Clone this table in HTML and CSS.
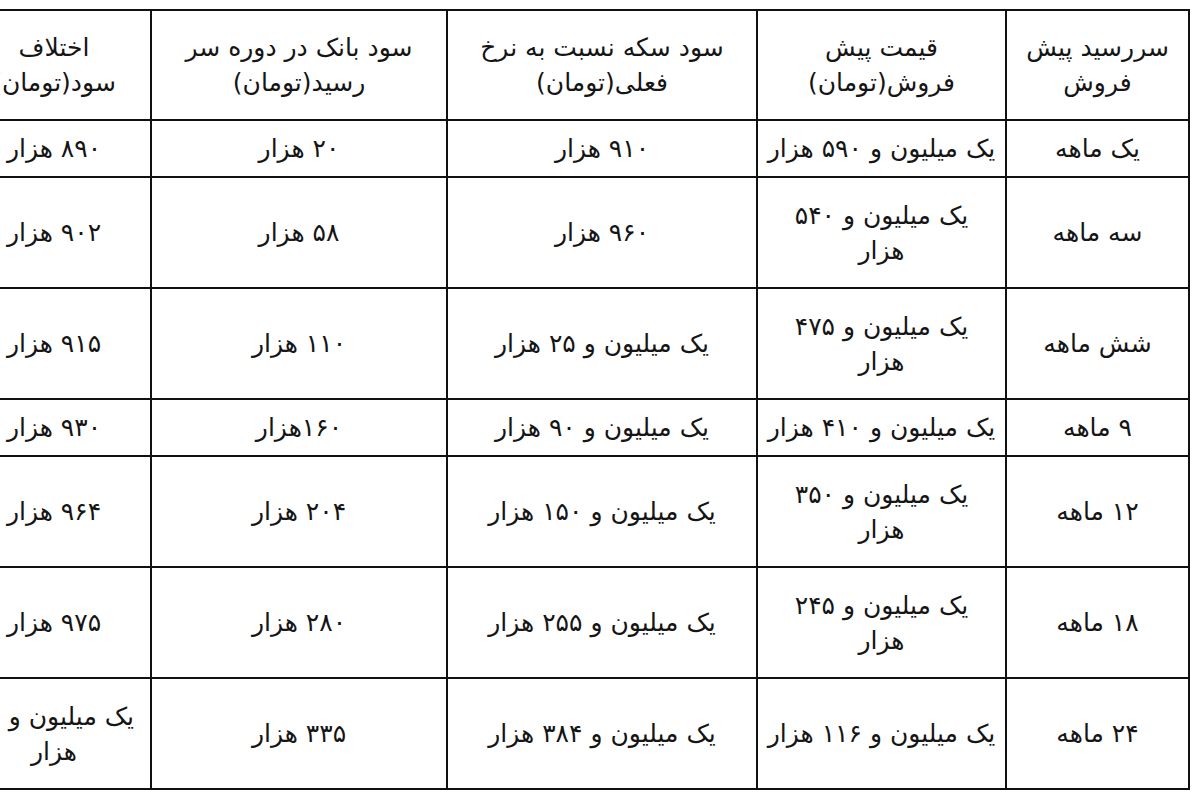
FILE: index.html
```html
<!DOCTYPE html>
<html lang="fa" dir="rtl">
<head>
<meta charset="utf-8">
<title>جدول پیش فروش سکه</title>
<link rel="stylesheet" href="styles.css">
</head>
<body>
<div class="page">
<table class="grid">
  <colgroup>
    <col class="c1"><col class="c2"><col class="c3"><col class="c4"><col class="c5">
  </colgroup>
  <tr class="r-head">
    <td>سررسید پیش<br>فروش</td>
    <td>قیمت پیش<br>فروش(تومان)</td>
    <td>سود سکه نسبت به نرخ<br>فعلی(تومان)</td>
    <td>سود بانک در دوره سر<br>رسید(تومان)</td>
    <td>اختلاف<br>سود(تومان)</td>
  </tr>
  <tr class="r-s">
    <td>یک ماهه</td>
    <td>یک میلیون و ۵۹۰ هزار</td>
    <td>۹۱۰ هزار</td>
    <td>۲۰ هزار</td>
    <td>۸۹۰ هزار</td>
  </tr>
  <tr class="r-l">
    <td>سه ماهه</td>
    <td>یک میلیون و ۵۴۰<br>هزار</td>
    <td>۹۶۰ هزار</td>
    <td>۵۸ هزار</td>
    <td>۹۰۲ هزار</td>
  </tr>
  <tr class="r-l">
    <td>شش ماهه</td>
    <td>یک میلیون و ۴۷۵<br>هزار</td>
    <td>یک میلیون و ۲۵ هزار</td>
    <td>۱۱۰ هزار</td>
    <td>۹۱۵ هزار</td>
  </tr>
  <tr class="r-s">
    <td>۹ ماهه</td>
    <td>یک میلیون و ۴۱۰ هزار</td>
    <td>یک میلیون و ۹۰ هزار</td>
    <td>۱۶۰هزار</td>
    <td>۹۳۰ هزار</td>
  </tr>
  <tr class="r-l">
    <td>۱۲ ماهه</td>
    <td>یک میلیون و ۳۵۰<br>هزار</td>
    <td>یک میلیون و ۱۵۰ هزار</td>
    <td>۲۰۴ هزار</td>
    <td>۹۶۴ هزار</td>
  </tr>
  <tr class="r-l">
    <td>۱۸ ماهه</td>
    <td>یک میلیون و ۲۴۵<br>هزار</td>
    <td>یک میلیون و ۲۵۵ هزار</td>
    <td>۲۸۰ هزار</td>
    <td>۹۷۵ هزار</td>
  </tr>
  <tr class="r-l">
    <td>۲۴ ماهه</td>
    <td>یک میلیون و ۱۱۶ هزار</td>
    <td>یک میلیون و ۳۸۴ هزار</td>
    <td>۳۳۵ هزار</td>
    <td>یک میلیون و ۴۹<br>هزار</td>
  </tr>
</table>
</div>
</body>
</html>
```
FILE: styles.css
```css
html, body {
  margin: 0;
  padding: 0;
  background: #ffffff;
  overflow: hidden;
}
.page {
  width: 1200px;
  height: 800px;
  overflow: hidden;
  direction: rtl;
  padding-top: 9px;
  box-sizing: border-box;
}
.grid {
  direction: rtl;
  border-collapse: collapse;
  table-layout: fixed;
  width: 1232px;
  margin-right: 10px;
  margin-left: -42px;
  font-family: "DejaVu Sans", sans-serif;
  font-size: 25px;
  color: #151515;
}
.c1 { width: 183px; }
.c2 { width: 249px; }
.c3 { width: 310px; }
.c4 { width: 296px; }
.c5 { width: 194px; }
.grid td {
  border: 2px solid #111111;
  text-align: center;
  vertical-align: middle;
  padding: 0;
  white-space: nowrap;
  line-height: 35px;
}
.r-head { height: 110px; }
.r-s { height: 57px; }
.r-l { height: 111px; }
```
